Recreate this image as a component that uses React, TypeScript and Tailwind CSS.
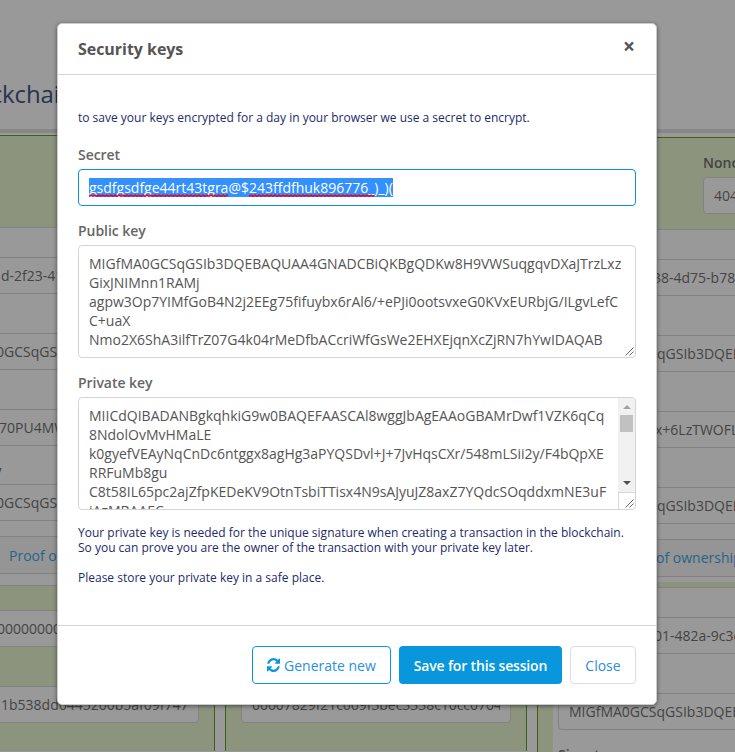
import React from "react";

function Field({ text, pad = "pl-[10px]", className = "" }: { text: string; pad?: string; className?: string }) {
  return (
    <div className={`h-[37px] shrink-0 overflow-hidden rounded border border-[#828282] bg-[#999999] ${className}`}>
      <div className={`whitespace-nowrap leading-[35px] ${pad}`}>{text}</div>
    </div>
  );
}

function RefreshIcon() {
  return (
    <svg className="h-[14px] w-[13px] fill-[#0896dd]" viewBox="128 128 1536 1536" preserveAspectRatio="none">
      <path d="M1639 1056q0 5-1 7-64 268-268 434.5t-478 166.5q-146 0-282.5-55t-243.5-157l-129 129q-19 19-45 19t-45-19-19-45v-448q0-26 19-45t45-19h448q26 0 45 19t19 45-19 45l-137 137q71 66 161 102t187 36q134 0 250-65t186-179q11-17 53-117 8-23 30-23h192q13 0 22.5 9.5t9.5 22.5zm25-800v448q0 26-19 45t-45 19h-448q-26 0-45-19t-19-45 19-45l138-138q-148-137-349-137-134 0-250 65t-186 179q-11 17-53 117-8 23-30 23h-199q-13 0-22.5-9.5t-9.5-22.5v-7q65-268 270-434.5t480-166.5q146 0 284 55.5t245 156.5l130-129q19-19 45-19t45 19 19 45z" />
    </svg>
  );
}

function Grip() {
  return (
    <svg className="absolute right-px bottom-px h-[9px] w-[9px]" viewBox="0 0 9 9" stroke="#555" strokeWidth="0.9">
      <path d="M0.5 8.5L8.5 0.5M4.5 8.5L8.5 4.5" />
    </svg>
  );
}

function Misspelled({ id, children }: { id: string; children: React.ReactNode }) {
  return (
    <span className="relative inline-block">
      {children}
      <svg className="absolute bottom-0 left-0 h-[3px] w-full">
        <defs>
          <pattern id={id} width="4" height="3" patternUnits="userSpaceOnUse">
            <path d="M0 2.4L2 1.2L4 2.4" fill="none" stroke="#e8002c" strokeWidth="1.5" />
          </pattern>
        </defs>
        <rect width="100%" height="3" fill={`url(#${id})`} />
      </svg>
    </span>
  );
}

function Page() {
  return (
    <div className="h-full overflow-hidden text-[#444444]">
      <div className="h-[129px] pt-[76px]">
        <div className="-ml-[45px] text-[24px] leading-[36px] tracking-[-0.1px] whitespace-nowrap text-[#2a3152]">Blockchain</div>
      </div>
      <div className="h-1 bg-[#878787]" />
      <div className="-ml-[87px] flex w-[926px] gap-[10px] pt-[2px]">
        <div className="flex h-[616px] w-[302px] flex-col border-x border-t border-[#3f5f1a] bg-[#8c947e]">
          <div className="h-[91px] shrink-0" />
          <div className="flex h-[348px] shrink-0 flex-col border-y border-[#828282] bg-[#999999]">
            <Field text="d-2f23-41b7" pad="pl-[71px]" className="mx-[15px] mt-[29px]" />
            <Field text="0GCSqGSIb3D" pad="pl-[66px]" className="mx-[15px] mt-[39px]" />
            <Field text="70PU4MWq" pad="pl-[69px]" className="mx-[15px] mt-[39px]" />
            <div className="h-[39px] pt-[15px] pl-[16px] leading-[19px] font-semibold">
              <span className="pl-[64px]">y</span>
            </div>
            <Field text="0GCSqGSIb3D" pad="pl-[66px]" className="mx-[15px]" />
            <div className="mt-[15px] h-[38px] border-y border-[#828282] bg-[#959595] pl-[95px] leading-[37px] whitespace-nowrap text-[#26638a]">
              Proof of
            </div>
          </div>
          <div className="-mt-px h-3 shrink-0 border-b border-[#828282] bg-[#999999]" />
          <Field text="00000000000000" pad="pl-[67px]" className="mx-[15px] mt-[24px]" />
          <Field text="1b538dd6445200b5af09f747" pad="pl-[71px]" className="mx-[15px] mt-[39px]" />
        </div>
        <div className="flex h-[616px] w-[302px] flex-col justify-end border-x border-t border-[#3f5f1a] bg-[#8c947e] px-[15px] pb-[28px]">
          <div className="flex h-[37px] overflow-hidden rounded border border-[#828282] bg-[#999999] px-[10px] leading-[35px]">
            <span className="overflow-hidden tracking-[-0.05px]">00007829f21c669f3bec3338c10cc07043</span>
          </div>
        </div>
        <div className="mt-[2px] flex h-[640px] w-[302px] flex-col border border-[#3f5f1a] bg-[#8c947e]">
          <div className="h-[91px] shrink-0 pt-[15px] pl-[165px]">
            <div className="h-[24px] leading-[20px] font-semibold">Nonce</div>
            <Field text="40484" />
          </div>
          <div className="flex h-[353px] shrink-0 flex-col border-t border-[#828282] bg-[#999999]">
            <Field text="38-4d75-b784" pad="pl-[94px]" className="mx-[20px] mt-[29px]" />
            <Field text="qGSIb3DQEB" pad="pl-[98px]" className="mx-[20px] mt-[39px]" />
            <Field text="x+6LzTWOFL" pad="pl-[96px]" className="mx-[20px] mt-[39px]" />
            <Field text="qGSIb3DQEB" pad="pl-[98px]" className="mx-[20px] mt-[39px]" />
            <div className="mt-[15px] h-[38px] border-y border-[#828282] bg-[#959595] pl-[118px] leading-[36px] whitespace-nowrap text-[#26638a]">
              of ownership
            </div>
          </div>
          <div className="mt-[5px] ml-[15px] h-[170px] border-t border-[#828282] bg-[#999999] pl-[5px]">
            <Field text="01-482a-9c3d" pad="pl-[95px]" className="mt-[29px]" />
            <Field text="MIGfMA0GCSqGSIb3DQEB" className="mt-[39px]" />
            <div className="pt-[15px] leading-[19px] font-semibold">Signature</div>
          </div>
        </div>
      </div>
    </div>
  );
}

export default function App() {
  return (
    <div className="relative h-[752px] w-[735px] overflow-hidden bg-[#999999] font-['Open_Sans','Noto_Sans',sans-serif] text-[14px]">
      <Page />
      <div className="absolute inset-0 flex items-start pt-[23px] pl-[57px]">
        <div className="flex h-[682px] w-[600px] flex-col rounded-[5px] border border-[#cccccc] bg-white text-[#555555] shadow-[0_1px_4px_rgba(0,0,0,0.5)]">
          <div className="flex h-[51px] shrink-0 items-start justify-between border-b border-[#d4d4d4] pr-[21px] pl-5">
            <h4 className="pt-[13px] text-[16px] leading-6 font-bold tracking-[-0.04px]">Security keys</h4>
            <button className="pt-[8px] text-[21px] leading-[28px] font-bold">×</button>
          </div>
          <div className="grow px-5 pt-[35px]">
            <p className="text-[12px] leading-[15px] text-[#1c2a6b]">
              to save your keys encrypted for a day in your browser we use a secret to encrypt.
            </p>
            <label className="mt-5 block leading-[19px] font-semibold tracking-[-0.05px] text-[#666666]">Secret</label>
            <div className="mt-[5px] flex h-[37px] rounded border border-[#0b93d4] px-[10px] pt-2">
              <span className="h-[19px] w-[304px] overflow-hidden bg-[#3390ff] leading-[19px] whitespace-nowrap text-white">
                <Misspelled id="w1">gsdfgsdfge44rt43tgra</Misspelled>@$<Misspelled id="w2">243ffdfhuk896776_</Misspelled>)_)(
              </span>
            </div>
            <label className="mt-[15px] block leading-[19px] font-semibold tracking-[-0.05px] text-[#666666]">Public key</label>
            <div className="relative mt-[5px] h-[113px] rounded border border-[#d4d4d4] px-[10px] py-2 leading-[19px] whitespace-nowrap">
              <div>MIGfMA0GCSqGSIb3DQEBAQUAA4GNADCBiQKBgQDKw8H9VWSuqgqvDXaJTrzLxz</div>
              <div>GixJNIMnn1RAMj</div>
              <div>agpw3Op7YIMfGoB4N2j2EEg75fifuybx6rAl6/+ePJi0ootsvxeG0KVxEURbjG/ILgvLefC</div>
              <div>C+uaX</div>
              <div>Nmo2X6ShA3ilfTrZ07G4k04rMeDfbACcriWfGsWe2EHXEjqnXcZjRN7hYwIDAQAB</div>
              <Grip />
            </div>
            <label className="mt-[15px] block leading-[19px] font-semibold tracking-[-0.05px] text-[#666666]">Private key</label>
            <div className="mt-[5px] flex h-[113px] justify-between overflow-hidden rounded border border-[#d4d4d4] pl-[10px] leading-[19px] whitespace-nowrap">
              <div className="w-[528px] pt-2">
                <div>MIICdQIBADANBgkqhkiG9w0BAQEFAASCAl8wggJbAgEAAoGBAMrDwf1VZK6qCq</div>
                <div>8NdolOvMvHMaLE</div>
                <div>k0gyefVEAyNqCnDc6ntggx8agHg3aPYQSDvl+J+7JvHqsCXr/548mLSii2y/F4bQpXE</div>
                <div>RRFuMb8gu</div>
                <div>C8t58IL65pc2ajZfpKEDeKV9OtnTsbiTTisx4N9sAJyuJZ8axZ7YQdcSOqddxmNE3uF</div>
                <div>iAzMBAAEC</div>
              </div>
              <div className="flex w-[17px] flex-col">
                <div className="flex h-[94px] flex-col items-center bg-[#f1f1f1] pt-[7px]">
                  <div className="h-0 w-0 border-x-4 border-b-4 border-x-transparent border-b-[#a3a3a3]" />
                  <div className="mt-[6px] h-[17px] w-[13px] bg-[#c1c1c1]" />
                  <div className="mt-[49px] h-0 w-0 border-x-4 border-t-4 border-x-transparent border-t-[#505050]" />
                </div>
                <div className="relative h-[17px] border-t border-l border-[#d9d9d9]">
                  <Grip />
                </div>
              </div>
            </div>
            <p className="mt-[15px] text-[12px] leading-[15px] whitespace-nowrap text-[#1c2a6b]">
              Your private key is needed for the unique signature when creating a transaction in the blockchain.
              <br />
              So you can prove you are the owner of the transaction with your private key later.
              <br />
              <br />
              Please store your private key in a safe place.
            </p>
          </div>
          <div className="flex h-[79px] shrink-0 justify-end gap-2 border-t border-[#d4d4d4] px-5 pt-5">
            <button className="flex h-[38px] w-[139px] items-center gap-1 rounded border border-[#0896dd] pl-[14px] whitespace-nowrap text-[#2a8fd8]">
              <RefreshIcon />
              Generate new
            </button>
            <button className="h-[38px] w-[163px] rounded bg-[#0896dd] font-semibold tracking-[-0.17px] whitespace-nowrap text-white">
              Save for this session
            </button>
            <button className="h-[38px] w-[66px] rounded border border-[#dddddd] text-[#2a8fd8]">Close</button>
          </div>
        </div>
      </div>
    </div>
  );
}
